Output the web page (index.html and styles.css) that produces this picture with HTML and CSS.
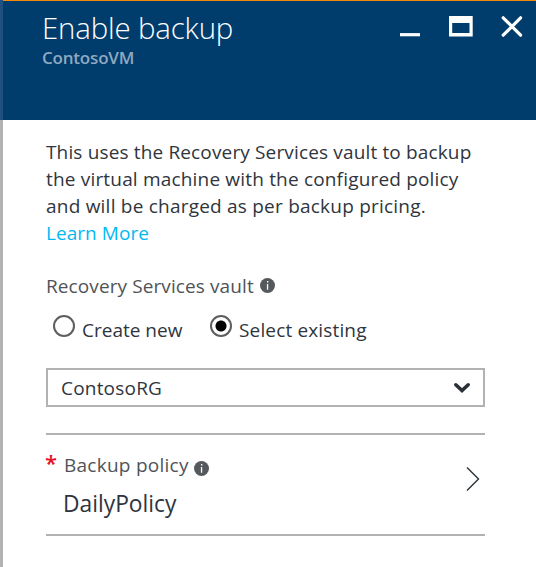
FILE: index.html
```html
<!DOCTYPE html>
<html lang="en">
<head>
<meta charset="utf-8">
<title>Enable backup</title>
<link rel="stylesheet" href="styles.css">
</head>
<body>
<main class="blade">
  <header class="header">
    <div class="titles">
      <h1 class="title">Enable backup</h1>
      <div class="subtitle">ContosoVM</div>
    </div>
    <svg class="controls" width="124" height="24" viewBox="0 0 124 24" fill="none">
      <path d="M0 19.7h20" stroke="#fff" stroke-width="3.2"/>
      <path fill="#fff" fill-rule="evenodd" d="M49 1h23.7v20.6H49zM52.2 8v10h17.3V8z"/>
      <path d="M103.2 2.8l17.4 17.4M120.6 2.8l-17.4 17.4" stroke="#fff" stroke-width="3.2" stroke-linecap="round"/>
    </svg>
  </header>
  <div class="content">
    <p class="intro">
      <span class="line l1">This uses the Recovery Services vault to backup</span>
      <span class="line l2">the virtual machine with the configured policy</span>
      <span class="line l3">and will be charged as per backup pricing.</span>
      <a class="line link">Learn More</a>
    </p>
    <div class="field-label">
      <span>Recovery Services vault</span>
      <svg class="info" width="15" height="15" viewBox="0 0 15 15"><circle cx="7.5" cy="7.5" r="7.5" fill="#55595e"/><path fill="#fff" d="M7 3h1.4v1.5H7zM6.9 6h1.3v5.8H6.9z"/></svg>
    </div>
    <div class="radios">
      <span class="radio"></span><span class="option create">Create new</span>
      <span class="radio checked"></span><span class="option existing">Select existing</span>
    </div>
    <div class="select">
      <span>ContosoRG</span>
      <svg width="18" height="12" viewBox="0 0 18 12" fill="none"><path d="M2.8 2.8L9 8.6l6.2-5.8" stroke="#2b3038" stroke-width="3.6" stroke-linecap="round"/></svg>
    </div>
    <div class="policy">
      <span class="required">*</span>
      <div class="policy-text">
        <div class="policy-label"><span>Backup policy</span>
          <svg class="info" width="15" height="15" viewBox="0 0 15 15"><circle cx="7.5" cy="7.5" r="7.5" fill="#55595e"/><path fill="#fff" d="M7 3h1.4v1.5H7zM6.9 6h1.3v5.8H6.9z"/></svg>
        </div>
        <div class="policy-value">DailyPolicy</div>
      </div>
      <svg class="chevron" width="14" height="26" viewBox="0 0 14 26" fill="none"><path d="M1 1.5L12.5 13 1 24.5" stroke="#2b3038" stroke-width="1.4"/></svg>
    </div>
  </div>
</main>
</body>
</html>
```
FILE: styles.css
```css
* { box-sizing: border-box; }
body {
  margin: 0;
  background: #fff;
  color: #30353d;
  font: 19px/27px "Open Sans", "Noto Sans", sans-serif;
  white-space: nowrap;
}
svg { display: block; flex: none; }
.blade { display: flex; flex-direction: column; height: 567px; }
.header {
  display: flex;
  flex: none;
  justify-content: space-between;
  height: 120px;
  padding: 0 12px 0 39px;
  background: #003c6c;
  border-left: 3px solid #1f5180;
  box-shadow: inset 0 1px #f68a07;
}
.titles { padding-top: 8px; }
.title {
  margin: 0;
  font-size: 29.4px;
  line-height: 40px;
  font-weight: 330;
  letter-spacing: -.15px;
  color: #fff;
}
.subtitle {
  font-size: 17px;
  line-height: 20px;
  font-weight: 550;
  letter-spacing: -.2px;
  color: #8fa9c0;
}
.controls { margin-top: 15px; }
.content { flex: 1; padding: 19px 51px 0 43px; border-left: 3px solid #b2b2b2; }
.intro { margin: 0; }
.line { display: block; }
.l1 { letter-spacing: .15px; }
.l2 { letter-spacing: .18px; }
.l3 { letter-spacing: .22px; }
.link { color: #00b9f2; letter-spacing: .05px; }
.field-label {
  display: flex;
  gap: 6px;
  margin-top: 26px;
  color: #505357;
  letter-spacing: .1px;
}
.field-label .info { margin-top: 5px; }
.radios { display: flex; align-items: flex-start; padding: 15px 0 0 7px; }
.radio {
  width: 22px;
  height: 22px;
  border: 2px solid #5e5e5e;
  border-radius: 50%;
}
.checked { background: radial-gradient(circle, #000 5px, #fff 6px); }
.option { margin: 2px 0 0 7px; }
.create { width: 128px; }
.existing { letter-spacing: .15px; }
.select {
  display: flex;
  align-items: center;
  justify-content: space-between;
  height: 39px;
  margin-top: 24px;
  padding: 0 12px 0 13px;
  border: 2px solid #b2b2b2;
  letter-spacing: .2px;
}
.select span { padding-top: 2px; }
.policy {
  display: flex;
  height: 103px;
  margin-top: 26px;
  padding: 16px 5px 0 0;
  border: solid #b2b2b2;
  border-width: 2px 0;
}
.required { width: 18px; font-size: 22px; line-height: 23px; font-weight: 600; text-indent: -1px; color: #e81123; }
.policy-text { flex: 1; padding-top: 1px; }
.policy-label { display: flex; gap: 5px; color: #505357; letter-spacing: .25px; }
.policy-label .info { margin-top: 9px; }
.policy-value { margin: 10px 0 0 -1px; font-size: 22.8px; line-height: 30px; }
.chevron { margin-top: 15px; }
```
